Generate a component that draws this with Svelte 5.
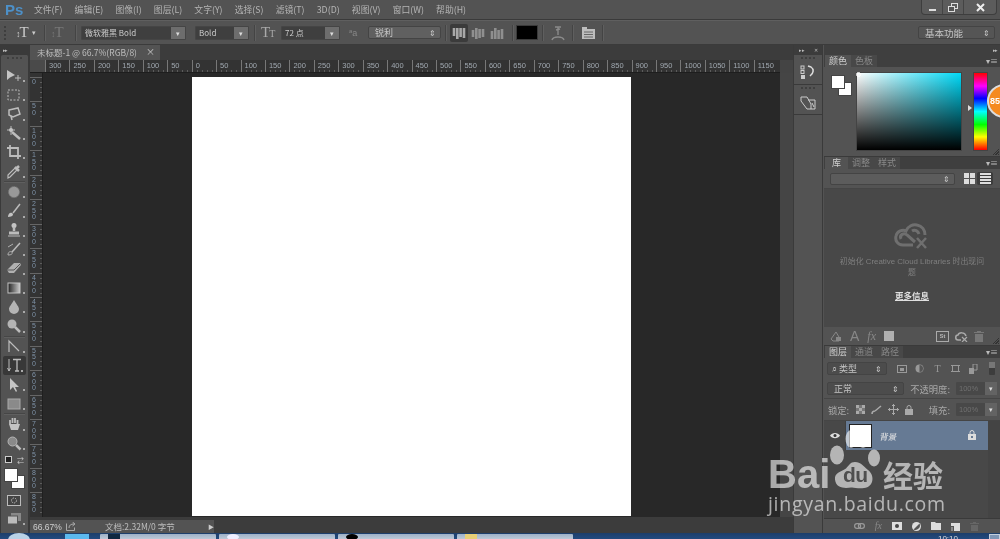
<script>
  const menus = ['文件(F)','编辑(E)','图像(I)','图层(L)','文字(Y)','选择(S)','滤镜(T)','3D(D)','视图(V)','窗口(W)','帮助(H)'];
  const hruler = [300,250,200,150,100,50,0,50,100,150,200,250,300,350,400,450,500,550,600,650,700,750,800,850,900,950,1000,1050,1100,1150];
  const vruler = [0,50,100,150,200,250,300,350,400,450,500,550,600,650,700,750,800,850];
  const tools = [
    {n:'move'},{n:'marquee'},{n:'lasso'},{n:'wand'},{n:'crop'},{n:'dropper',sep:1},
    {n:'heal'},{n:'brush'},{n:'stamp'},{n:'history'},{n:'eraser'},{n:'gradient'},
    {n:'burn'},{n:'dodge',sep:1},{n:'pen'},{n:'type',active:1},{n:'select'},{n:'rect',sep:1},{n:'hand'},{n:'zoom'}
  ];
</script>

<div class="app">
  <header class="menubar">
    <span class="logo">Ps</span>
    <nav class="menus">
      {#each menus as m}<span>{m}</span>{/each}
    </nav>
    <div class="winbtns">
      <span class="wb"><svg width="9" height="9" viewBox="0 0 9 9"><rect x="1" y="6" width="7" height="2" fill="#ddd"/></svg></span>
      <span class="wb"><svg width="10" height="9" viewBox="0 0 10 9" fill="none" stroke="#ddd"><rect x="3.5" y=".5" width="6" height="5"/><rect x=".5" y="3.5" width="6" height="5" fill="#555"/></svg></span>
      <span class="wb wide"><svg width="9" height="9" viewBox="0 0 9 9" stroke="#eee" stroke-width="2"><path d="M1 1l7 7M8 1l-7 7"/></svg></span>
    </div>
  </header>

  <div class="options">
    <span class="grip"></span>
    <span class="opt-type"><b class="arrow-t">↕</b><i>T</i><em class="caret">▾</em></span>
    <span class="vsep"></span>
    <span class="opt-type dim"><b class="arrow-t">↕</b><i>T</i></span>
    <span class="vsep s2"></span>
    <span class="combo font"><span class="ctext">微软雅黑 Bold</span><span class="cbtn">▾</span></span>
    <span class="combo style"><span class="ctext">Bold</span><span class="cbtn">▾</span></span>
    <span class="vsep"></span>
    <span class="opt-size"><i>T</i><i class="small">T</i></span>
    <span class="combo size"><span class="ctext">72 点</span><span class="cbtn">▾</span></span>
    <span class="aa"><small>a</small>a</span>
    <span class="select aliasing">锐利<em>⇕</em></span>
    <span class="vsep"></span>
    <span class="aligns">
      <span class="al on"><svg width="14" height="14" viewBox="0 0 14 14" stroke="#a8a8a8"><path d="M2 2v8M5.300 2v11M8.600 2v9M12 2v10" stroke-width="2.600"/></svg></span>
      <span class="al"><svg width="14" height="14" viewBox="0 0 14 14" stroke="#8f8f8f"><path d="M2 4v7M5.300 2v11M8.600 3v9M12 3v8" stroke-width="2.600"/></svg></span>
      <span class="al"><svg width="14" height="14" viewBox="0 0 14 14" stroke="#8f8f8f"><path d="M2 5v8M5.300 2v11M8.600 4v9M12 3v10" stroke-width="2.600"/></svg></span>
    </span>
    <span class="vsep s3"></span>
    <span class="swatch-black"></span>
    <span class="vsep s4"></span>
    <span class="warp"><svg width="16" height="18" viewBox="0 0 16 18" fill="none" stroke="#8a8a8a"><path d="M5 3h6M8 3v8M6 6l4-1M2 16c1-4 11-4 12 0" stroke-width="1.400"/></svg></span>
    <span class="vsep s5"></span>
    <span class="panels-ic"><svg width="13" height="13" viewBox="0 0 13 13"><path d="M0 1h5v2h8v10H0z" fill="#bdbdbd"/><path d="M2 6h9M2 8.500h9M2 11h9" stroke="#666"/></svg></span>
    <span class="vsep s6"></span>
    <span class="spacer"></span>
    <span class="select workspace">基本功能<em>⇕</em></span>
  </div>

  <div class="main">
    <aside class="toolbar">
      <div class="tb-head">▸▸</div>
      <div class="tb-body">
        <div class="tb-grip"></div>
        {#each tools as t}
          <div class="tool" class:active={t.active}>
            <svg width="16" height="16" viewBox="0 0 16 16" fill="none" stroke="#bcbcbc">
              {#if t.n==='move'}<path d="M1 2v10l3-2.500L9 7z" fill="#c4c4c4" stroke="none"/><path d="M9 10h6M12 7v6" stroke-width="1"/>
              {:else if t.n==='marquee'}<rect x="2" y="3" width="11" height="10" stroke-dasharray="2 1.500"/>
              {:else if t.n==='lasso'}<path d="M3 4l9-2 2 6-7 3-4-2z" stroke-width="1.500"/><path d="M5 10l1 4" stroke-width="1.500"/>
              {:else if t.n==='wand'}<path d="M6 7l8 7" stroke-width="2.500"/><path d="M5 1v9M1 5h8" stroke-width="1"/><circle cx="5" cy="5" r="2" fill="#c4c4c4" stroke="none"/>
              {:else if t.n==='crop'}<path d="M4 1v11h11M1 4h11v11" stroke-width="1.800"/>
              {:else if t.n==='dropper'}<path d="M2 14l2-1 7-7-2-2-7 7z" stroke-width="1.200"/><path d="M9 3l4 4M10 5l3-3" stroke-width="2.500"/>
              {:else if t.n==='heal'}<circle cx="8" cy="8" r="5.500" fill="#999" stroke="#777" stroke-dasharray="1.500 1"/>
              {:else if t.n==='brush'}<path d="M14 1L7 10" stroke-width="1.500"/><path d="M2 14c0-3 2-5 4-4 2 1 1 4-4 4z" fill="#c4c4c4" stroke="none"/>
              {:else if t.n==='stamp'}<circle cx="8" cy="3.500" r="2.500" fill="#c4c4c4" stroke="none"/><path d="M8 5v4" stroke-width="2.500"/><path d="M3 11h10" stroke-width="3"/><path d="M2 14h12" stroke-width="1"/>
              {:else if t.n==='history'}<path d="M14 2L6 11" stroke-width="1.500"/><path d="M2 14c0-3 2-4 4-3 1 2-1 3-4 3zM2 6l5-3" stroke="#b0b0b0"/>
              {:else if t.n==='eraser'}<path d="M1 10l7-7h6l1 2-7 8H3z" fill="#b0b0b0" stroke="none"/><path d="M1 10h7l6-6" stroke="#555"/>
              {:else if t.n==='gradient'}<rect x="2" y="3" width="12" height="10" fill="url(#gr)" stroke="#c4c4c4"/>
              {:else if t.n==='burn'}<path d="M8 1c3 5 5 7 5 9a5 5 0 0 1-10 0c0-2 2-4 5-9z" fill="#b4b4b4" stroke="none"/>
              {:else if t.n==='dodge'}<circle cx="6" cy="6" r="4.500" fill="#b4b4b4" stroke="none"/><path d="M9 9l5 5" stroke-width="2.500"/>
              {:else if t.n==='pen'}<path d="M3 14V3l10 10" stroke-width="1.200"/>
              {:else if t.n==='select'}<path d="M4 1v12l3-3 3 5 1-1-2-4h4z" fill="#c4c4c4" stroke="none"/>
              {:else if t.n==='rect'}<rect x="2" y="3" width="12" height="10" fill="#8a8a8a" stroke="#aaa"/>
              {:else if t.n==='hand'}<path d="M4 8V4M6.500 7V2M9 7V2M11.500 8V4" stroke-width="1.800"/><path d="M3 8l2 6h7l2-6z" fill="#c4c4c4" stroke="none"/>
              {:else if t.n==='zoom'}<circle cx="6.500" cy="6.500" r="4.500" fill="#8a8a8a" stroke="#b4b4b4"/><path d="M10 10l4.500 4.500" stroke-width="2.500"/>
              {:else if t.n==='type'}<path d="M3 2v12M1.500 11l1.500 3 1.500-3" stroke-width="1"/><path d="M7 2.500h8M11 2.500V14M9 14h4" stroke-width="1.300"/>
              {/if}
            </svg>
            <span class="corner"></span>
          </div>
          {#if t.sep}<div class="tb-sep"></div>{/if}
        {/each}
        <div class="mini-swap">
          <span class="mini"></span><span class="swapi">⇄</span>
        </div>
        <div class="fgbg tb-fg"><span class="bg"></span><span class="fg"></span></div>
        <div class="tool quick"><svg width="14" height="11" viewBox="0 0 14 11"><rect x=".5" y=".5" width="13" height="10" fill="#444" stroke="#bbb"/><circle cx="7" cy="5.500" r="2.500" fill="none" stroke="#bbb" stroke-dasharray="1.500 1"/></svg></div>
        <div class="tool screen"><svg width="14" height="12" viewBox="0 0 14 12"><rect x="4" y="0" width="10" height="8" fill="#888"/><rect x=".5" y="3" width="10" height="8" fill="#bbb" stroke="#555"/></svg><span class="corner"></span></div>
      </div>
    </aside>

    <section class="doc">
      <div class="tabs">
        <div class="doc-tab">未标题-1 @ 66.7%(RGB/8)<span class="tabx">×</span></div>
      </div>
      <div class="ruler-row">
        <div class="ruler-corner"></div>
        <div class="hruler">
          {#each hruler as v}<span class="hcell">{v}</span>{/each}
        </div>
      </div>
      <div class="doc-body">
        <div class="vruler">
          {#each vruler as v}<span class="vcell">{#each String(v) as d}<b>{d}</b>{/each}</span>{/each}
        </div>
        <div class="canvas"><div class="page"></div></div>
        <div class="vscroll"></div>
      </div>
      <div class="statusbar">
        <div class="status-left">
          <span class="zoomv">66.67%</span>
          <svg width="11" height="9" viewBox="0 0 11 9" fill="none" stroke="#aaa"><path d="M.5 1.500v7h8v-3"/><path d="M3 6c0-3 2-4 5-4M6.500 0L9 2 6.500 4"/></svg>
          <span class="docsize">文档:2.32M/0 字节</span>
          <span class="play">▶</span>
        </div>
      </div>
    </section>

    <aside class="dock">
      <div class="dock-head"><span>▸▸</span><span>✕</span></div>
      <div class="dock-item"><span class="dock-grip"></span>
        <svg width="16" height="14" viewBox="0 0 16 14" fill="none"><rect x="1" y="1" width="3" height="3" stroke="#ccc"/><rect x="1" y="5.500" width="3" height="3" stroke="#ccc"/><rect x="1" y="10" width="4" height="4" fill="#ccc"/><path d="M8 1l3 1c3 2 3 6-1 9" stroke="#ddd" stroke-width="1.500"/></svg>
      </div>
      <div class="dock-item"><span class="dock-grip"></span>
        <svg width="17" height="16" viewBox="0 0 17 16" fill="none" stroke="#ccc"><path d="M1 2h6l4 7v5H7L1 6zM8 5h7v9h-4M12 8l2 4"/></svg>
      </div>
    </aside>

    <aside class="panels">
      <div class="p-strip">▸▸</div>
      <div class="panel color">
        <div class="ptabs"><span class="ptab on">颜色</span><span class="ptab">色板</span><span class="pmenu">▾≡</span></div>
        <div class="color-body">
          <div class="fgbg"><span class="bg"></span><span class="fg"></span></div>
          <div class="picker"><span class="handle"></span></div>
          <span class="hue-mark"></span>
          <div class="hue"></div>
          <span class="resize"></span>
        </div>
        <span class="badge">85</span>
      </div>

      <div class="panel lib">
        <div class="ptabs"><span class="ptab on">库</span><span class="ptab">调整</span><span class="ptab">样式</span><span class="pmenu">▾≡</span></div>
        <div class="lib-top">
          <span class="select libsel"><em>⇕</em></span>
          <span class="lv"><svg width="11" height="11" viewBox="0 0 11 11" fill="#ddd"><rect width="5" height="5"/><rect x="6" width="5" height="5"/><rect y="6" width="5" height="5"/><rect x="6" y="6" width="5" height="5"/></svg></span>
          <span class="lv on"><svg width="11" height="11" viewBox="0 0 11 11" fill="#ddd"><rect width="11" height="2"/><rect y="3" width="11" height="2"/><rect y="6" width="11" height="2"/><rect y="9" width="11" height="2"/></svg></span>
        </div>
        <div class="lib-body">
          <svg class="cc" width="36" height="28" viewBox="0 0 36 28" fill="none" stroke="#6f6f6f" stroke-width="3"><path d="M19 23H9C3 23 1 18 2 14c1-5 7-7 10-5 2-5 7-7 11-6 5 1 8 5 8 10"/><path d="M7 17c-2-4 3-7 6-4l8 7M18 9c3-2 6 0 7 3"/><path d="M23 16l9 10M32 16l-9 10" stroke-width="2.500"/></svg>
          <p class="lib-msg">初始化 Creative Cloud Libraries 时出现问题</p>
          <p class="lib-more">更多信息</p>
        </div>
        <div class="lib-foot">
          <svg width="12" height="11" viewBox="0 0 12 11"><path d="M1 8l5-7 3 5v4H3z" fill="none" stroke="#888"/><path d="M6 6h5v4H6z" fill="#888"/></svg>
          <span class="ft-a">A</span>
          <span class="ft-fx">fx</span>
          <span class="ft-sq"></span>
          <span class="spacer"></span>
          <span class="ft-st">St</span>
          <svg class="tight" width="13" height="11" viewBox="0 0 13 11" fill="none" stroke="#aaa" stroke-width="1.500"><path d="M6 9H3C0 9 0 4 3 4c1-3 7-3 8 1"/><path d="M7 6l5 5M12 6l-5 5" stroke-width="1.200"/></svg>
          <svg class="tight" width="10" height="11" viewBox="0 0 10 11" fill="#777"><path d="M3 0h4v1h3v1H0V1h3zM1 3h8v8H1z"/></svg>
          <span class="resize"></span>
        </div>
      </div>

      <div class="panel layers">
        <div class="ptabs"><span class="ptab on">图层</span><span class="ptab">通道</span><span class="ptab">路径</span><span class="pmenu">▾≡</span></div>
        <div class="l-filter">
          <span class="select kind">⌕ 类型<em>⇕</em></span>
          <span class="fil"><svg width="10" height="8" viewBox="0 0 10 8"><rect x=".5" y=".5" width="9" height="7" fill="none" stroke="#999"/><rect x="3" y="3" width="4" height="3" fill="#999"/></svg></span>
          <span class="fil"><svg width="9" height="9" viewBox="0 0 9 9"><circle cx="4.500" cy="4.500" r="4" fill="#999"/><path d="M4.500 1a3.500 3.500 0 0 1 0 7z" fill="#555"/></svg></span>
          <span class="fil t">T</span>
          <span class="fil"><svg width="9" height="9" viewBox="0 0 9 9" fill="none" stroke="#999"><rect x="1.500" y="1.500" width="6" height="6"/><path d="M0 1.500h2M7 1.500h2M0 7.500h2M7 7.500h2"/></svg></span>
          <span class="fil"><svg width="9" height="10" viewBox="0 0 9 10"><path d="M4 0h4v6H4z" fill="none" stroke="#999"/><path d="M0 4h5v6H0z" fill="#999"/></svg></span>
          <span class="togg"><i></i></span>
        </div>
        <div class="l-row blendrow sepb">
          <span class="select blend">正常<em>⇕</em></span>
          <span class="lbl">不透明度:</span>
          <span class="combo pct"><span class="ctext">100%</span><span class="cbtn">▾</span></span>
        </div>
        <div class="l-row sepb lock">
          <span class="lbl lock-l">锁定:</span>
          <svg width="9" height="9" viewBox="0 0 9 9" fill="#aaa"><rect width="9" height="9" fill="#777"/><rect width="3" height="3"/><rect x="6" width="3" height="3"/><rect x="3" y="3" width="3" height="3"/><rect y="6" width="3" height="3"/><rect x="6" y="6" width="3" height="3"/></svg>
          <svg width="11" height="10" viewBox="0 0 11 10" fill="none" stroke="#aaa" stroke-width="1.500"><path d="M10 1L4 6M1 9c0-2 1-3 3-3"/></svg>
          <svg width="11" height="11" viewBox="0 0 11 11" fill="none" stroke="#aaa"><path d="M5.500 0v11M0 5.500h11M4 2l1.500-1.500L7 2M4 9l1.500 1.500L7 9M2 4L.5 5.500 2 7M9 4l1.500 1.500L9 7"/></svg>
          <svg width="8" height="10" viewBox="0 0 8 10"><path d="M2 4V2.500a2 2 0 0 1 4 0V4" fill="none" stroke="#aaa"/><rect y="4" width="8" height="6" fill="#aaa"/></svg>
          <span class="spacer"></span>
          <span class="lbl">填充:</span>
          <span class="combo pct"><span class="ctext">100%</span><span class="cbtn">▾</span></span>
        </div>
        <div class="l-list">
          <div class="l-eye"><svg width="10" height="7" viewBox="0 0 10 7"><path d="M0 3.500C2 0 8 0 10 3.500 8 7 2 7 0 3.500z" fill="#ddd"/><circle cx="5" cy="3.500" r="1.500" fill="#333"/></svg></div>
          <div class="l-item">
            <span class="thumb"></span>
            <span class="lname">背景</span>
            <svg class="lk" width="8" height="10" viewBox="0 0 8 10"><path d="M2 4V2.500a2 2 0 0 1 4 0V4" fill="none" stroke="#ddd"/><rect y="4" width="8" height="6" fill="#ddd"/><rect x="3" y="6" width="2" height="2" fill="#667a94"/></svg>
          </div>
        </div>
        <div class="l-foot">
          <svg width="11" height="6" viewBox="0 0 11 6" fill="none" stroke="#999" stroke-width="1.200"><rect x=".6" y=".6" width="6" height="4.800" rx="2.400"/><rect x="4.400" y=".6" width="6" height="4.800" rx="2.400"/></svg>
          <span class="ft-fx s">fx</span>
          <svg width="10" height="8" viewBox="0 0 10 8"><rect width="10" height="8" fill="#ddd"/><circle cx="5" cy="4" r="2" fill="#444"/></svg>
          <svg width="9" height="9" viewBox="0 0 9 9"><circle cx="4.500" cy="4.500" r="4.500" fill="#ddd"/><path d="M7.500 1.500l-6 6a4.500 4.500 0 0 0 6-6z" fill="#555"/></svg>
          <svg width="10" height="8" viewBox="0 0 10 8"><path d="M0 0h4l1 1h5v7H0z" fill="#ddd"/></svg>
          <svg width="9" height="9" viewBox="0 0 9 9"><path d="M0 1h9v8H3V4H0z" fill="#ddd"/><path d="M0 5h2v4H0z" fill="#888"/></svg>
          <svg width="9" height="9" viewBox="0 0 9 9" fill="#666"><path d="M3 0h3v1h3v1H0V1h3zM1 3h7v6H1z"/></svg>
        </div>
      </div>
    </aside>
  </div>

  <footer class="taskbar">
    <span class="start"></span>
    <span class="tb-ic"></span>
    <span class="tk"><i class="dk"></i></span>
    <span class="tk"><i class="wh"></i></span>
    <span class="tk"><i class="bk"></i></span>
    <span class="tk"><i class="ye"></i></span>
    <span class="spacer"></span>
    <span class="clock">10:10</span>
    <span class="showdesk"></span>
  </footer>

  <div class="watermark">
    <span class="wm-bai">Bai</span>
    <svg class="paw" width="52" height="62" viewBox="0 0 52 62"><ellipse cx="23" cy="11" rx="5.500" ry="9"/><ellipse cx="35" cy="11" rx="6" ry="9"/><ellipse cx="9" cy="27" rx="7" ry="9.500"/><ellipse cx="46" cy="30" rx="6" ry="8.500"/><path d="M27 34c6 0 8 4 13 8 7 5 6 17-4 18-6 1-10-1-13-.5-6 1-15 1-16-8-1-7 7-8 11-11 3-3 4-6.500 9-6.500z"/></svg>
    <span class="wm-du">du</span>
    <span class="wm-cn">经验</span>
    <span class="wm-url">jingyan.baidu.com</span>
  </div>
</div>

<svg width="0" height="0" class="defs"><defs><linearGradient id="gr"><stop offset="0" stop-color="#222"/><stop offset="1" stop-color="#ccc"/></linearGradient></defs></svg>

<style>
  :global(body){margin:0;background:#535353;overflow:hidden}
  .defs{position:absolute}
  .app{position:relative;width:1000px;height:539px;overflow:hidden;display:flex;flex-direction:column;background:#535353;color:#c8c8c8;font-family:"Noto Sans CJK SC","Liberation Sans",sans-serif;font-size:9px;filter:blur(.35px)}
  .spacer{flex:1}
  i,em{font-style:normal}

  .menubar{height:20px;display:flex;align-items:center;position:relative;flex:none;background:#535353;border-bottom:1px solid #3a3a3a;box-sizing:border-box}
  .logo{width:34px;padding-left:5px;box-sizing:border-box;font:700 15px "Liberation Sans",sans-serif;color:#4d90c8}
  .menus{display:flex;font-size:8.800px;gap:12.200px}
  .menus span{white-space:nowrap;color:#b4b4b4}
  .winbtns{position:absolute;right:3px;top:0;height:14px;display:flex;border:1px solid #3e3e3e;border-top:0;border-radius:0 0 4px 4px;background:#5c5c5c}
  .wb{width:20px;display:flex;align-items:center;justify-content:center;border-right:1px solid #444}
  .wb.wide{width:32px;border:0}

  .options{height:25px;flex:none;display:flex;align-items:center;background:#535353;border-bottom:1px solid #3b3b3b;box-sizing:border-box;border-top:1px solid #5f5f5f}
  .grip{width:2px;height:14px;margin:0 8px 0 4px;border-left:2px dotted #3e3e3e}
  .opt-type{display:inline-flex;align-items:baseline;width:28px;font:15px "Liberation Serif",serif;color:#ccc;gap:0}
  .opt-type.dim{color:#777;width:24px}
  .arrow-t{font-weight:400;font-size:9px;margin-right:-1px}
  .caret{font-size:7px;margin-left:3px;position:relative;top:-2px}
  .vsep{width:1px;height:16px;background:#444;margin:0 6px 0 0;box-shadow:1px 0 #5f5f5f;flex:none}
  .s2{margin-right:5px}
  .s3{margin-right:3px}
  .s4{margin-right:1px}
  .s5{margin-right:2px;margin-left:1px}
  .s6{margin:0}
  .combo{display:inline-flex;height:14px;background:#3f3f3f;border:1px solid #454545;border-radius:1px;align-items:center;box-sizing:border-box;color:#ccc;font-size:8px}
  .ctext{flex:1;padding-left:3px;white-space:nowrap}
  .cbtn{width:14px;height:100%;background:#6d6d6d;color:#ddd;font-size:7px;display:flex;align-items:center;justify-content:center}
  .font{width:105px;margin-right:9px}
  .style{width:54px;margin-right:5px}
  .opt-size{width:20px;font:15px "Liberation Serif",serif;color:#aaa;display:inline-flex;align-items:baseline;margin:0}
  .opt-size i.small{font-size:10px;margin-left:-1px}
  .size{width:59px;margin-right:9px}
  .aa{width:16px;color:#888;font:9px "Liberation Sans",sans-serif;margin-right:3px}
  .aa small{font-size:6px;vertical-align:3px}
  .select{display:inline-flex;align-items:center;justify-content:space-between;height:13px;box-sizing:border-box;border:1px solid #444;border-radius:2px;background:#606060;color:#c4c4c4;padding:0 4px 0 6px;font-size:9px}
  .select em{font-size:8px;color:#ccc}
  .aliasing{width:73px;margin-right:4px}
  .aligns{display:flex;margin-right:5px;margin-left:-2px}
  .al{width:18px;height:18px;display:flex;align-items:center;justify-content:center;margin-right:1px}
  .al.on{background:#3b3b3b;border-radius:2px}
  .swatch-black{width:20px;height:13px;background:#000;border:1px solid #3a3a3a;margin-right:4px}
  .warp{width:27px;display:flex;justify-content:center}
  .panels-ic{width:27px;display:flex;justify-content:center}
  .workspace{width:77px;height:13px;margin-right:5px;font-size:9.500px;background:#555}

  .main{flex:1;display:flex;min-height:0}

  .toolbar{width:30px;flex:none;background:#3a3a3a;display:flex;flex-direction:column}
  .tb-head{height:10px;font-size:5px;line-height:9px;color:#bbb;padding-left:3px;letter-spacing:-1px}
  .tb-body{flex:1;background:#535353;border-right:1px solid #3a3a3a;box-sizing:border-box;width:28px;margin-left:1px;border-radius:2px 2px 0 0;padding-top:1px;overflow:hidden}
  .tb-grip{height:2px;margin:1px 6px 5px;border-top:2px dotted #3f3f3f}
  .tool{height:19.200px;display:flex;align-items:center;justify-content:center;position:relative}
  .tool svg{margin-left:-1px}
  .tool.active{background:#383838;border-radius:2px;margin:0 2px 0 2px}
  .corner{position:absolute;right:3px;bottom:3px;width:2px;height:2px;background:#aaa}
  .tb-sep{height:1px;background:#464646;margin:0 3px;box-shadow:0 1px #5f5f5f}
  .mini-swap{height:14px;display:flex;justify-content:space-between;align-items:center;padding:0 4px}
  .mini{width:7px;height:7px;background:#222;border:1px solid #ccc;box-sizing:border-box}
  .swapi{font-size:7px;color:#ccc}
  .tb-fg{margin:1px 0 2px 3px}
  .fgbg{position:relative;width:21px;height:21px;flex:none}
  .fgbg .fg{position:absolute;left:0;top:0;width:14px;height:14px;background:#fff;border:1px solid #444;box-sizing:border-box}
  .fgbg .bg{position:absolute;right:0;bottom:0;width:14px;height:14px;background:#fff;border:1px solid #444;box-sizing:border-box}
  .tool.quick{height:20px}
  .tool.screen{height:17px}

  .doc{flex:1;min-width:0;display:flex;flex-direction:column}
  .tabs{height:15px;flex:none;background:#3c3c3c}
  .doc-tab{width:130px;height:15px;background:#535353;color:#bdbdbd;font-size:8.500px;line-height:14px;padding-left:7px;box-sizing:border-box;white-space:nowrap;position:relative}
  .tabx{position:absolute;right:5px;top:0;font-size:9px;color:#ccc}
  .ruler-row{height:13px;flex:none;display:flex;background:#333;border-bottom:1px solid #1e1e1e;box-sizing:border-box}
  .ruler-corner{width:15px;background:#4a4a4a;flex:none}
  .hruler{display:flex;width:735px;background:#333;overflow:hidden;flex:none}
  .hcell{width:24.450px;flex:none;box-sizing:border-box;border-left:1px solid #777;color:#a0a8b0;font:7.500px/12px "Liberation Sans",sans-serif;padding-left:3px;background:repeating-linear-gradient(90deg,transparent 0 4.300px,#5c5c5c 4.300px 5px) 0 100%/100% 2px no-repeat}
  .ruler-row::after{content:"";flex:1;background:#444;margin-bottom:-1px}
  .doc-body{flex:1;display:flex;min-height:0}
  .vruler{width:13px;flex:none;background:#333;overflow:hidden;border-right:1px solid #1f1f1f;box-sizing:border-box;padding-top:4px}
  .vcell{height:24.450px;display:flex;flex-direction:column;box-sizing:border-box;border-top:1px solid #666;align-items:flex-start;padding-left:2px;color:#7f93a8;font-size:0;background:repeating-linear-gradient(transparent 0 4.300px,#5c5c5c 4.300px 5px) 100% 0/2px 100% no-repeat}
  .vcell b{font:500 7px/7px "Liberation Sans",sans-serif;height:6.500px}
  .canvas{flex:1;background:#282828;min-width:0;padding:4px 0 0 149px;box-sizing:border-box}
  .page{width:439px;height:439px;background:#fff}
  .vscroll{width:13px;flex:none;background:#454545}
  .statusbar{height:16px;flex:none;background:#3c3c3c;box-sizing:border-box;padding-top:3px}
  .status-left{width:184px;height:13px;background:#535353;display:flex;align-items:center;gap:4px;padding-left:3px;box-sizing:border-box;position:relative}
  .zoomv{font:8.500px "Liberation Sans",sans-serif;color:#cfcfcf}
  .docsize{position:absolute;left:75px;top:0;line-height:13px;font-size:8.500px;color:#bdbdbd}
  .play{position:absolute;right:0;top:0;line-height:13px;font-size:6px;color:#ccc}

  .dock{width:30px;flex:none;background:#535353;border-left:1px solid #3a3a3a;border-right:1px solid #3a3a3a;box-sizing:border-box;display:flex;flex-direction:column}
  .dock-head{height:10px;background:#3c3c3c;display:flex;justify-content:space-around;color:#bbb;font-size:5px;line-height:10px;flex:none}
  .dock-item{height:30px;background:#535353;border-bottom:1px solid #3a3a3a;display:flex;flex-direction:column;align-items:center;gap:4px;box-sizing:border-box;flex:none}
  .dock-grip{width:14px;height:2px;border-top:2px dotted #3f3f3f;margin-top:2px;flex:none}

  .panels{width:176px;flex:none;background:#3a3a3a;display:flex;flex-direction:column;margin-left:1px}
  .p-strip{height:10px;text-align:right;color:#bbb;font-size:5px;line-height:10px;padding-right:3px;letter-spacing:-1px;flex:none;background:#3f3f3f}
  .panel{background:#535353;position:relative;display:flex;flex-direction:column;margin-bottom:1px;flex:none}
  .ptabs{height:12px;background:#3f3f3f;display:flex;flex:none;position:relative;padding-left:1px}
  .ptab{padding:0 4px;line-height:12px;color:#888;font-size:9px;background:#484848}
  .ptab.on{background:#535353;color:#d0d0d0}
  .lib .ptab.on{padding:0 7px}
  .pmenu{position:absolute;right:2px;top:0;line-height:11px;color:#bbb;font-size:8px}
  .color{height:101px}
  .color-body{position:relative;flex:1;display:flex;padding:5px 0 0 7px;box-sizing:border-box;min-height:0}
  .color-body .fgbg{margin-top:3px}
  .picker{width:106px;height:79px;margin-left:4px;background:linear-gradient(to top,#000,transparent),linear-gradient(to right,#fff,#00d9f7);border:1px solid #444;box-sizing:border-box;position:relative;flex:none}
  .handle{position:absolute;left:-1px;top:-1px;width:5px;height:5px;border:1px solid #fff;border-radius:50%;box-sizing:border-box}
  .hue-mark{width:0;height:0;border-left:4px solid #ddd;border-top:3px solid transparent;border-bottom:3px solid transparent;margin:33px 0 0 6px;flex:none}
  .hue{width:15px;height:79px;margin-left:1px;flex:none;background:linear-gradient(to bottom,#f00,#f0f 17%,#00f 33%,#0ff 50%,#0f0 67%,#ff0 83%,#f00);border:1px solid #444;box-sizing:border-box}
  .resize{position:absolute;right:1px;bottom:1px;width:7px;height:7px;background:repeating-linear-gradient(135deg,transparent 0 1px,#333 1px 2px);clip-path:polygon(100% 0,100% 100%,0 100%)}
  .badge{position:absolute;left:163px;top:29px;width:34px;height:34px;border-radius:50%;background:#f58a1f;border:2px solid #ddd;box-sizing:border-box;color:#fff;font:700 9px/30px "Liberation Sans",sans-serif;padding-left:1px}

  .lib{height:188px}
  .lib-top{height:20px;flex:none;display:flex;align-items:center;padding-left:6px;border-bottom:1px solid #454545;box-sizing:border-box}
  .libsel{width:125px;height:12px;justify-content:flex-end;background:#5c5c5c;margin-right:7px}
  .lv{width:14px;height:13px;display:flex;align-items:center;justify-content:center}
  .lv.on{background:#3c3c3c;border-radius:2px;width:16px;margin-left:1px}
  .lib-body{flex:1;background:#484848;display:flex;flex-direction:column;align-items:center;padding-top:33px;box-sizing:border-box;min-height:0}
  .cc{flex:none}
  .lib-msg{margin:6px 0 0;color:#7f7f7f;font-size:7.900px;width:150px;text-align:center;line-height:11px;font-family:"Liberation Sans","Noto Sans CJK SC",sans-serif}
  .lib-more{margin:11px 0 0;color:#e0e0e0;font-size:8.500px;font-weight:700;text-decoration:underline;line-height:12px}
  .lib-foot{height:18px;flex:none;background:#535353;display:flex;align-items:center;gap:8px;padding:0 16px 0 6px;color:#888;position:relative}
  .tight{margin-left:-2px}
  .ft-a{font:14px "Liberation Sans",sans-serif;color:#888;line-height:14px}
  .ft-fx{font:italic 12px "Liberation Serif",serif;color:#888}
  .ft-sq{width:10px;height:10px;background:#b0b0b0}
  .ft-st{width:11px;height:9px;border:1px solid #aaa;color:#bbb;font:700 5.500px/9px "Liberation Sans",sans-serif;text-align:center}

  .layers{flex:1;margin-bottom:0;min-height:0}
  .l-filter,.l-row{display:flex;align-items:center;flex:none;box-sizing:border-box;padding:0 3px}
  .l-filter{height:21px;gap:5px}
  .kind{width:60px;background:#4c4c4c;height:13px;padding-left:4px;margin-right:3px}
  .fil{width:13px;display:flex;justify-content:center;color:#999;font:10px "Liberation Serif",serif}
  .togg{width:6px;height:13px;background:#3d3d3d;margin-left:4px;border-radius:1px;position:relative}
  .togg i{position:absolute;left:0;top:0;width:6px;height:6px;background:#777}
  .l-row{height:20px;gap:6px}
  .sepb{border-bottom:1px solid #454545}
  .blend{width:80px;background:#4c4c4c}
  .lbl{color:#a8a8a8;font-size:9.300px;white-space:nowrap}
  .lock{gap:6px;padding-left:4px;height:22px}
  .lock-l{margin-right:1px}
  .pct{width:41px;height:13px;border:0;background:#484848;font-size:7.500px;flex:none;font-family:"Liberation Sans",sans-serif;margin-left:auto}
  .pct .ctext{color:#707070}
  .pct .cbtn{width:12px;background:#636363}
  .l-list{flex:1;display:flex;background:#484848;align-items:flex-start;border-right:12px solid #444;min-height:0}
  .l-eye{width:22px;height:29px;display:flex;align-items:center;justify-content:center;border-right:1px solid #3f3f3f;box-sizing:border-box;flex:none}
  .l-item{flex:1;height:29px;background:#667a94;display:flex;align-items:center;position:relative}
  .thumb{width:23px;height:24px;background:#fff;border:1px solid #222;margin-left:3px;box-sizing:border-box;flex:none}
  .lname{color:#e8e8e8;font-size:8.500px;margin-left:8px;transform:skewX(-12deg)}
  .lk{position:absolute;right:12px;top:9px}
  .l-foot{height:15px;flex:none;display:flex;align-items:center;justify-content:flex-end;gap:10px;padding-right:21px;background:#535353;border-top:1px solid #3a3a3a;box-sizing:border-box}
  .ft-fx.s{font-size:10px;line-height:10px}

  .taskbar{height:6px;flex:none;background:linear-gradient(#1d3e6a,#234a7e);display:flex;overflow:hidden;position:relative;padding:1px 0 0 100px;gap:3px;box-sizing:border-box}
  .start{position:absolute;left:8px;top:0;width:22px;height:14px;border-radius:50%;background:#b9d2e6}
  .tb-ic{position:absolute;left:65px;top:1px;width:24px;height:8px;background:#5cb9ee}
  .tk{width:116px;height:6px;background:linear-gradient(#9db0c6,#c3cedb);border-radius:1px 1px 0 0;position:relative;flex:none}
  .tk i{position:absolute;left:8px;top:0;width:12px;height:6px}
  .dk{background:#10273f}.wh{background:#eef;border-radius:50%}.bk{background:#000;border-radius:50%}.ye{background:#e8cf75}
  .clock{color:#ddd;font:8px/10px "Liberation Sans",sans-serif;margin-right:28px}
  .showdesk{width:11px;height:6px;background:#7f96b5;border:1px solid #c4cfdd;box-sizing:border-box;flex:none}

  .watermark{position:absolute;left:768px;top:428px;width:232px;height:92px;color:rgba(255,255,255,.6);pointer-events:none}
  .wm-bai{position:absolute;left:0;top:24px;font:700 40px/44px "Liberation Sans",sans-serif}
  .paw{position:absolute;left:60px;top:0;fill:rgba(255,255,255,.6)}
  .wm-du{position:absolute;left:75px;top:37px;font:700 21px/20px "Liberation Sans",sans-serif;color:#4e4e4e;letter-spacing:-.5px}
  .wm-cn{position:absolute;left:115px;top:29px;font:700 30px/34px "Noto Sans CJK SC",sans-serif}
  .wm-url{font:400 19.500px/24px "Open Sans","Liberation Sans",sans-serif;position:absolute;left:0;top:64px;letter-spacing:.7px;white-space:nowrap}
</style>
